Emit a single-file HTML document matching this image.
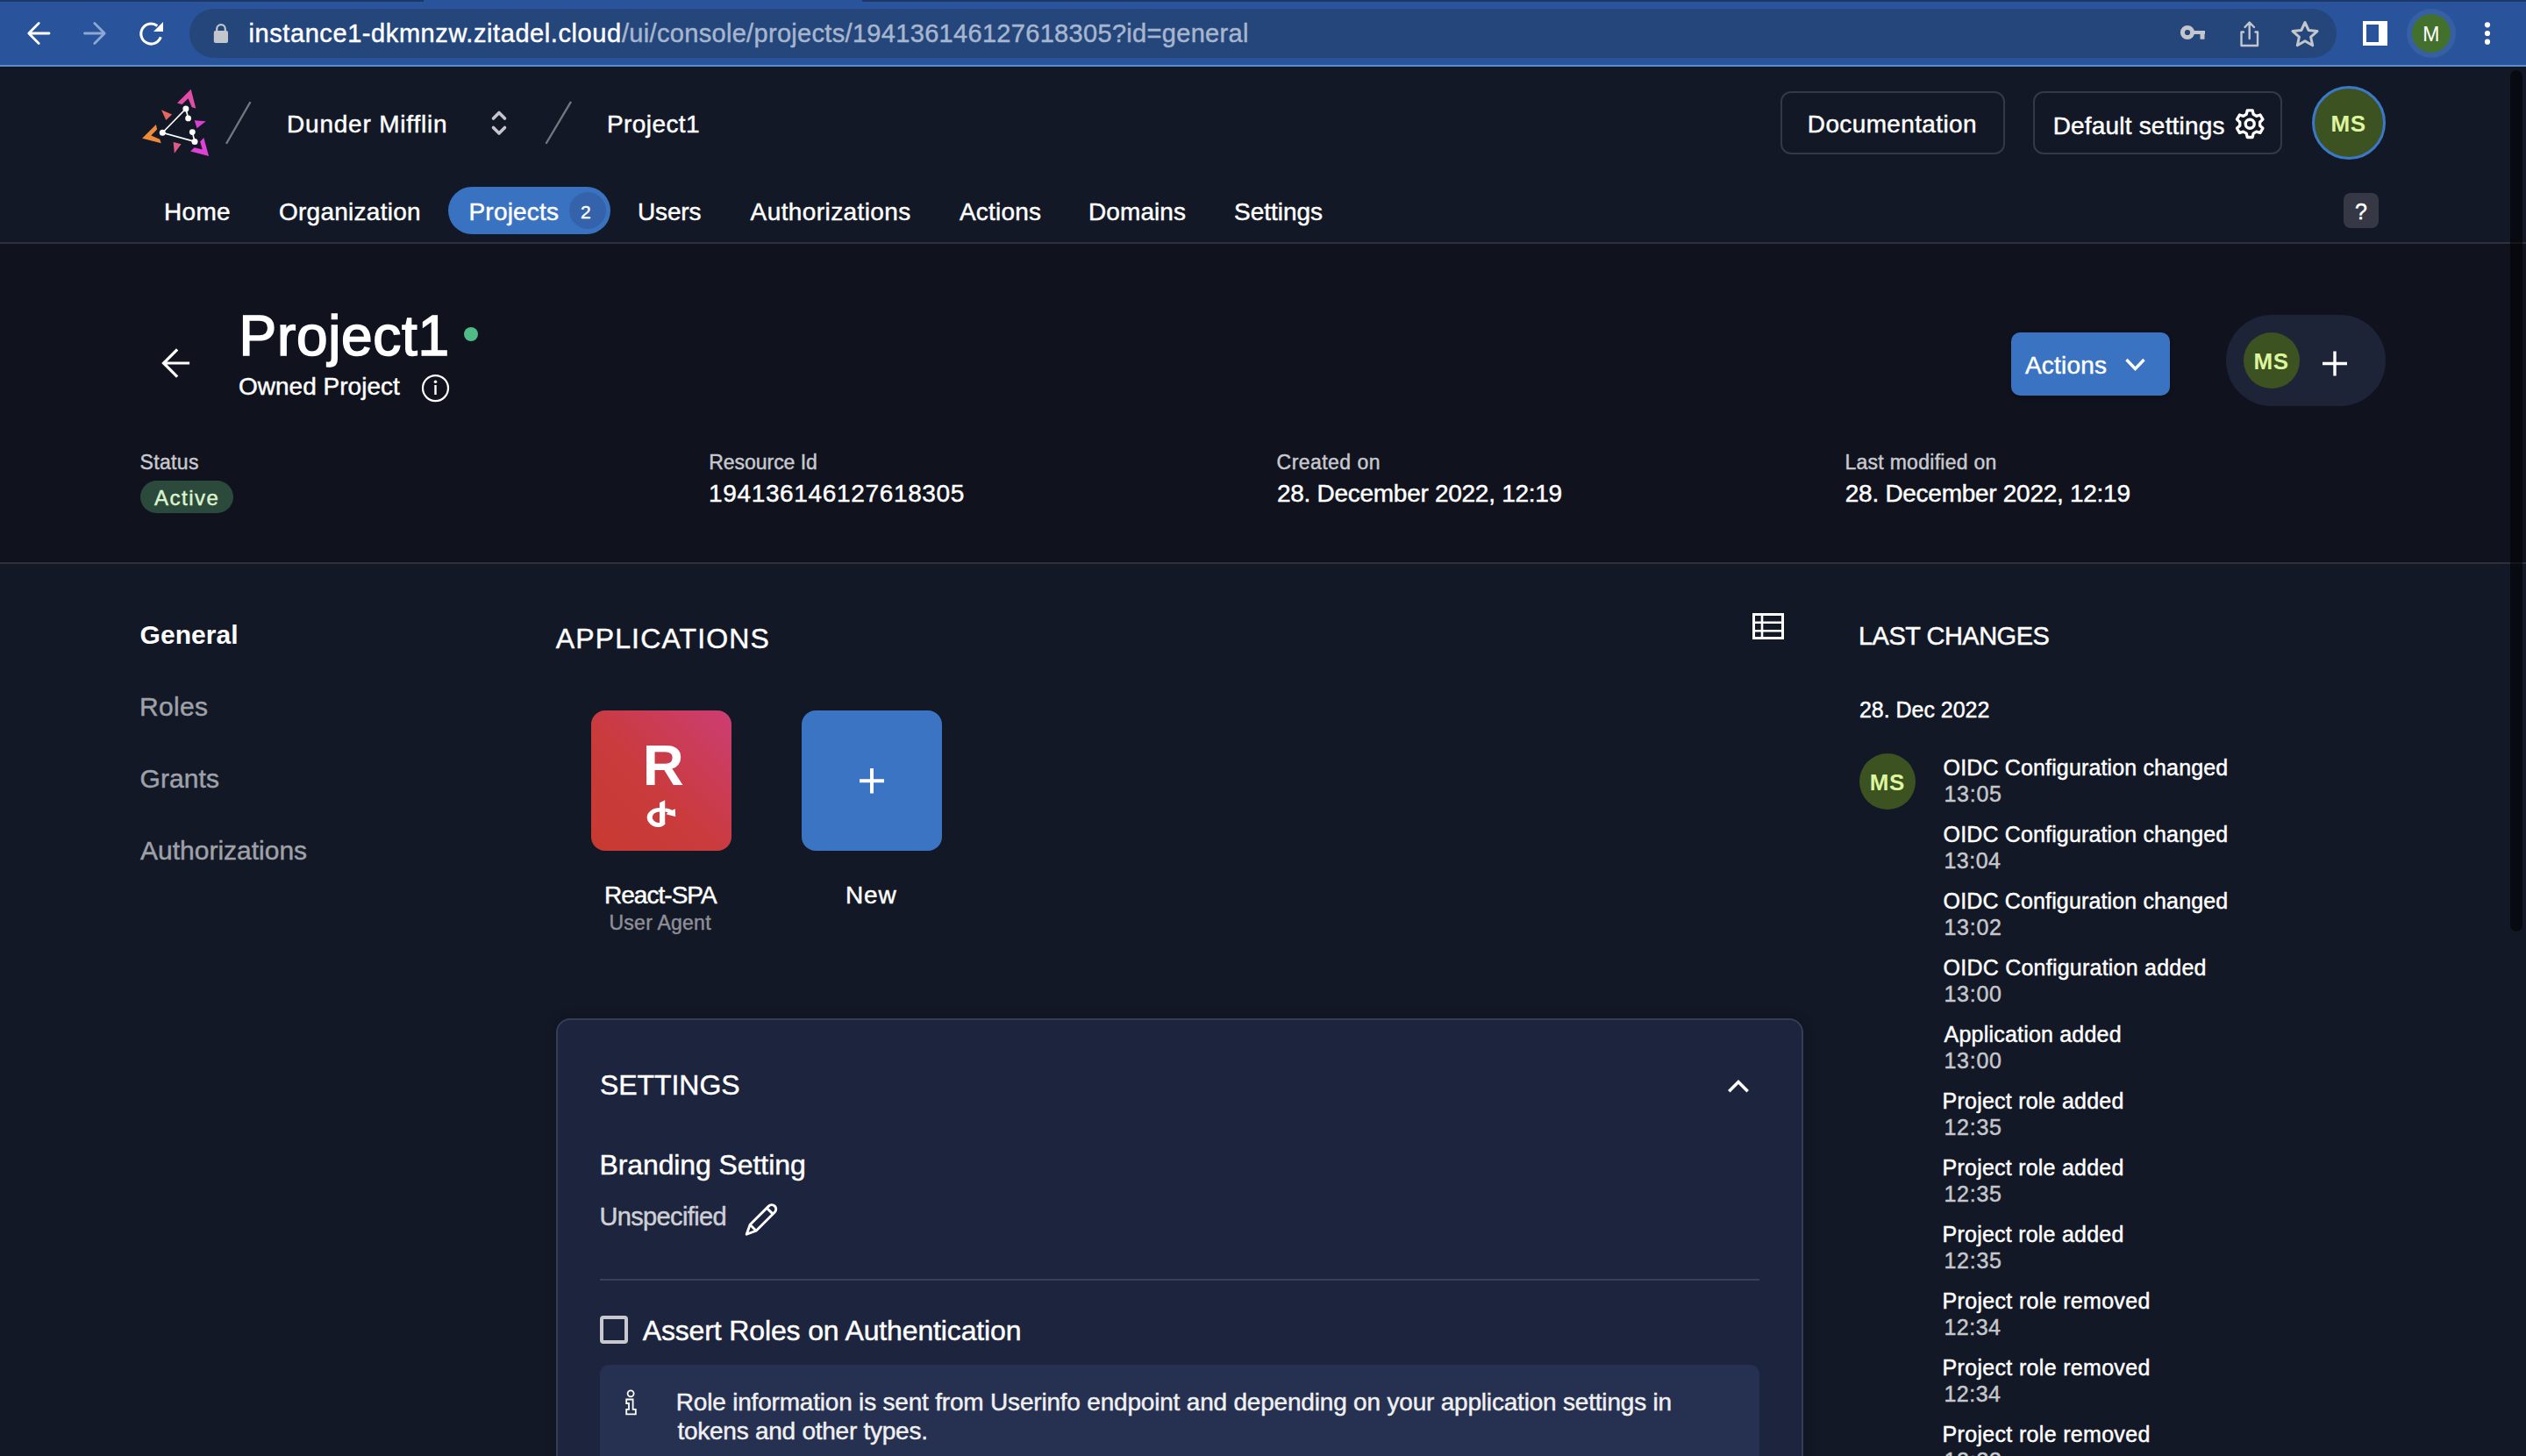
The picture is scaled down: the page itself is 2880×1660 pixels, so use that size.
<!DOCTYPE html>
<html><head><meta charset="utf-8"><style>

html,body{margin:0;padding:0;}
body{width:2880px;height:1660px;overflow:hidden;position:relative;background:#131826;font-family:"Liberation Sans",sans-serif;}
.t{position:absolute;line-height:1;white-space:pre;-webkit-text-stroke:0.45px currentColor;}
.a{position:absolute;}
svg.a{overflow:visible;}

</style></head><body>
<div class="a" style="left:0px;top:0px;width:2880px;height:76px;background:#29539a;"></div>
<div class="a" style="left:0px;top:0px;width:483px;height:2px;background:#1d3868;"></div>
<div class="a" style="left:983px;top:0px;width:1897px;height:2px;background:#1d3868;"></div>
<div class="a" style="left:0px;top:74px;width:2880px;height:2px;background:#5f8ccb;"></div>
<div class="a" style="left:0px;top:76px;width:2880px;height:200px;background:#131826;"></div>
<div class="a" style="left:0px;top:278px;width:2880px;height:363px;background:#10131e;"></div>
<div class="a" style="left:216px;top:10px;width:2448px;height:56px;background:#24467b;border-radius:28px;"></div>
<svg class="a" style="left:20px;top:15px" width="180" height="47" viewBox="20 15 180 47"><path d="M56 38H33.5M44.2 26.6L32.8 38L44.2 49.4" fill="none" stroke="#fff" stroke-width="2.8" stroke-linecap="round" stroke-linejoin="round"/><path d="M96.5 38H119M107.8 26.6L119.2 38L107.8 49.4" fill="none" stroke="#8ea8d3" stroke-width="2.8" stroke-linecap="round" stroke-linejoin="round"/><path d="M183.2 42.2A11.5 11.5 0 1 1 179.3 29.4" fill="none" stroke="#fff" stroke-width="3.1"/><path d="M186 25V36H175Z" fill="#fff"/></svg>
<svg class="a" style="left:240px;top:25px" width="25" height="27" viewBox="240 25 25 27"><path d="M247.2 36V32.9A4.8 4.8 0 0 1 256.8 32.9V36" fill="none" stroke="#c3c6cb" stroke-width="2.2"/><rect x="243.8" y="35" width="16.2" height="14" rx="2" fill="#c3c6cb"/></svg>
<svg class="a" style="left:2480px;top:20px" width="170" height="38" viewBox="2480 20 170 38"><circle cx="2494" cy="37" r="5.6" fill="none" stroke="#c3c6cb" stroke-width="5"/><path d="M2499 35H2514V39H2513.5V44.8H2508.5V39H2499Z" fill="#c3c6cb"/><path d="M2558 36.5H2555.5V52H2574V36.5H2571.5M2564.7 44V26.5M2559.5 31L2564.7 25.5L2570 31" fill="none" stroke="#c3c6cb" stroke-width="2.4" stroke-linejoin="round" stroke-linecap="round"/><path d="M2628 25.5L2632.2 34.6L2642 35.6L2634.6 42.2L2636.7 51.8L2628 46.8L2619.3 51.8L2621.4 42.2L2614 35.6L2623.8 34.6Z" fill="none" stroke="#c3c6cb" stroke-width="3" stroke-linejoin="round"/></svg>
<div class="a" style="left:2694px;top:24px;width:28px;height:28px;background:#fff;"></div>
<div class="a" style="left:2698px;top:28px;width:14px;height:20px;background:#29539a;"></div>
<div class="a" style="left:2744px;top:10px;width:56px;height:56px;border-radius:50%;background:#3660a3;"></div>
<div class="a" style="left:2750px;top:16px;width:44px;height:44px;border-radius:50%;background:#44702e;"></div>
<svg class="a" style="left:2825px;top:20px" width="25" height="38" viewBox="2825 20 25 38"><circle cx="2836" cy="28.3" r="3.1" fill="#fff"/><circle cx="2836" cy="38" r="3.1" fill="#fff"/><circle cx="2836" cy="47.7" r="3.1" fill="#fff"/></svg>
<svg class="a" style="left:150px;top:95px" width="100" height="90" viewBox="150 95 100 90"><defs><linearGradient id="lg1" x1="0" y1="0" x2="1" y2="1"><stop offset="0" stop-color="#e45593"/><stop offset="1" stop-color="#dd48b8"/></linearGradient></defs><path d="M202 117.6L217.7 101.8L223.3 123.4L218.7 122.2L214.6 112.3L207.5 119.1Z" fill="#e04ca6"/><path d="M177.9 142L162.1 157.7L183.7 163.3L182.2 158.7L172.3 154.6L179.1 147.5Z" fill="#ef8a3b"/><path d="M232.3 157.1L238.1 178.1L217.1 172.6L221.7 168.2L230.7 170.4L228.2 161.4Z" fill="#df40d6"/><path d="M184 125.3L196.1 130.5L189.3 137Z" fill="#e5675f"/><path d="M221.7 137.3L234.7 138.3L224.5 146.3Z" fill="#d940cf"/><path d="M197.6 162.1L206.6 164.2L198.9 174.7Z" fill="#e05a87"/><path d="M211.9 124L185.3 151.2L222 161.4M211.9 124L214.6 134.9M219.3 150.6L222 161.4" fill="none" stroke="#fff" stroke-width="1.7"/><circle cx="211.9" cy="124" r="3.5" fill="#fff"/><circle cx="214.6" cy="134.9" r="3.4" fill="#fff"/><circle cx="185.3" cy="151.2" r="3.5" fill="#fff"/><circle cx="219.3" cy="150.6" r="3.4" fill="#fff"/><circle cx="222" cy="161.4" r="3.5" fill="#fff"/></svg>
<svg class="a" style="left:250px;top:110px" width="410" height="60" viewBox="250 110 410 60"><path d="M258.5 163L285 117M623 163L650.6 116.7" stroke="#74767e" stroke-width="2.4" stroke-linecap="round"/><path d="M562.5 135L569 128.5L575.5 135M562.5 145.5L569 152L575.5 145.5" fill="none" stroke="#c5c6cc" stroke-width="3.6" stroke-linecap="round" stroke-linejoin="round"/></svg>
<div class="a" style="left:2030px;top:104px;width:256px;height:72px;box-sizing:border-box;border:2px solid #363843;border-radius:12px;"></div>
<div class="a" style="left:2318px;top:104px;width:284px;height:72px;box-sizing:border-box;border:2px solid #363843;border-radius:12px;"></div>
<svg class="a" style="left:2540px;top:116px" width="50" height="50" viewBox="2540 116 50 50"><path d="M2569.17 130.30 L2568.18 125.89 L2562.22 125.89 L2561.23 130.30 L2557.74 132.31 L2553.43 130.97 L2550.45 136.12 L2553.78 139.19 L2553.78 143.21 L2550.45 146.28 L2553.43 151.43 L2557.74 150.09 L2561.23 152.10 L2562.22 156.51 L2568.18 156.51 L2569.17 152.10 L2572.66 150.09 L2576.97 151.43 L2579.95 146.28 L2576.62 143.21 L2576.62 139.19 L2579.95 136.12 L2576.97 130.97 L2572.66 132.31Z" fill="none" stroke="#fff" stroke-width="3.3" stroke-linejoin="round"/><circle cx="2565.2" cy="141.2" r="5" fill="none" stroke="#fff" stroke-width="3.4"/></svg>
<div class="a" style="left:2636px;top:98px;width:84px;height:84px;box-sizing:border-box;border-radius:50%;border:3.5px solid #3b78c8;background:#3c5221;"></div>
<div class="a" style="left:511px;top:213px;width:185px;height:54px;background:#3a72c2;border-radius:27px;"></div>
<div class="a" style="left:649px;top:219px;width:42px;height:42px;background:#3463ab;border-radius:50%;"></div>
<div class="a" style="left:0px;top:276px;width:2880px;height:2px;background:#2e313c;"></div>
<div class="a" style="left:2672px;top:220px;width:40px;height:40px;background:#363945;border-radius:8px;"></div>
<svg class="a" style="left:175px;top:390px" width="50" height="50" viewBox="175 390 50 50"><path d="M214.5 414H187M201 399.5L186.5 414L201 428.5" fill="none" stroke="#fff" stroke-width="3.2" stroke-linecap="square"/></svg>
<div class="a" style="left:529px;top:373px;width:16px;height:16px;border-radius:50%;background:#4fbb85;"></div>
<svg class="a" style="left:475px;top:420px" width="45" height="45" viewBox="475 420 45 45"><circle cx="496.5" cy="442.6" r="14.5" fill="none" stroke="#fff" stroke-width="2.2"/><circle cx="496.5" cy="435.3" r="1.8" fill="#fff"/><rect x="495.3" y="439" width="2.4" height="11" fill="#fff"/></svg>
<div class="a" style="left:2293px;top:379px;width:181px;height:72px;background:#3a73c1;border-radius:10px;box-shadow:0 2px 4px rgba(0,0,0,.35);"></div>
<svg class="a" style="left:2415px;top:400px" width="40" height="30" viewBox="2415 400 40 30"><path d="M2424.5 410L2434.5 420.5L2444.5 410" fill="none" stroke="#fff" stroke-width="3.4"/></svg>
<div class="a" style="left:2538px;top:359px;width:182px;height:104px;background:#1d2438;border-radius:52px;"></div>
<div class="a" style="left:2558px;top:379px;width:64px;height:64px;background:#3c5221;border-radius:50%;"></div>
<svg class="a" style="left:2640px;top:395px" width="45" height="40" viewBox="2640 395 45 40"><path d="M2662 400.5V428.5M2648 414.5H2676" stroke="#fff" stroke-width="3.4"/></svg>
<div class="a" style="left:160px;top:548px;width:106px;height:37px;background:#2c4a3c;border-radius:18.5px;"></div>
<div class="a" style="left:0px;top:641px;width:2880px;height:2px;background:#2e313c;"></div>
<svg class="a" style="left:1990px;top:690px" width="50" height="45" viewBox="1990 690 50 45"><rect x="1999.5" y="700.5" width="33" height="27" fill="none" stroke="#fff" stroke-width="3"/><path d="M2009 701V727M2000 709.8H2032M2000 719.2H2032" stroke="#fff" stroke-width="2.6"/></svg>
<div class="a" style="left:674px;top:810px;width:160px;height:160px;background:linear-gradient(to top right,#c83a30 0%,#c93b3d 45%,#cd3d73 100%);border-radius:16px;"></div>
<div class="a" style="left:914px;top:810px;width:160px;height:160px;background:#3a74c2;border-radius:16px;"></div>
<svg class="a" style="left:970px;top:870px" width="50" height="40" viewBox="970 870 50 40"><path d="M994 876V904.5M980 890.2H1008" stroke="#fff" stroke-width="4"/></svg>
<svg class="a" style="left:730px;top:900px" width="50" height="50" viewBox="730 900 50 50"><path d="M752 921.1A14.3 11 0 0 0 752 943.1Q755.8 942.6 758.2 939.8V937.9L752 938A8.3 6.3 0 0 1 752 925.4Z" fill="#fff"/><path d="M752 915.2L758.2 912.2V939.8L752 941Z" fill="#fff"/><path d="M758.2 921.5Q763 921.6 766.4 923.7L769.8 922.2L770.2 930.9L759.5 928.3L761.5 926.2Q760 925.6 758.2 925.4Z" fill="#fff"/></svg>
<div class="a" style="left:2120px;top:859px;width:64px;height:64px;background:#3c5221;border-radius:50%;"></div>
<div class="a" style="left:634px;top:1161px;width:1422px;height:599px;box-sizing:border-box;background:#1d243d;border:2px solid #343e55;border-radius:16px;box-shadow:0 0 14px rgba(0,0,0,.22);"></div>
<svg class="a" style="left:1960px;top:1220px" width="45" height="35" viewBox="1960 1220 45 35"><path d="M1971.3 1244.3L1982 1233.6L1992.7 1244.3" fill="none" stroke="#fff" stroke-width="3.6"/></svg>
<svg class="a" style="left:840px;top:1362px" width="60" height="56" viewBox="840 1362 60 56"><path d="M851.20 1407.20L855.16 1396.31L876.37 1375.10A4.9 4.9 0 0 1 883.30 1382.03L862.09 1403.24Z M855.16 1396.31L862.09 1403.24 M874.25 1377.22L881.18 1384.15" fill="none" stroke="#fff" stroke-width="2.9" stroke-linejoin="round"/></svg>
<div class="a" style="left:684px;top:1458px;width:1322px;height:2px;background:#39415a;"></div>
<div class="a" style="left:684px;top:1500px;width:32px;height:32px;box-sizing:border-box;border:4px solid #c8c9cf;border-radius:4px;"></div>
<div class="a" style="left:684px;top:1556px;width:1322px;height:204px;background:#263050;border-radius:10px;"></div>
<svg class="a" style="left:705px;top:1580px" width="30" height="40" viewBox="705 1580 30 40"><circle cx="719.1" cy="1588.8" r="3.5" fill="none" stroke="#fff" stroke-width="1.8"/><path d="M714.2 1595.5H721.6V1606.9H724.8V1612.3H714.2V1606.9H717V1600H714.2Z" fill="none" stroke="#fff" stroke-width="1.8" stroke-linejoin="miter"/></svg>
<div class="a" style="left:2862px;top:80px;width:14px;height:982px;background:rgba(0,0,0,.55);border-radius:7px;"></div>
<div class="t" style="left:283.50px;top:24.00px;font-size:29px;letter-spacing:0.579px;color:#ffffff;">instance1-dkmnzw.zitadel.cloud</div>
<div class="t" style="left:709.00px;top:24.00px;font-size:29px;letter-spacing:0.315px;color:#a7b6cf;">/ui/console/projects/194136146127618305?id=general</div>
<div class="t" style="left:2762.20px;top:27.70px;font-size:23px;color:#fff;-webkit-text-stroke:0;">M</div>
<div class="t" style="left:327.00px;top:128.00px;font-size:28px;letter-spacing:0.796px;color:#fff;">Dunder Mifflin</div>
<div class="t" style="left:692.00px;top:128.20px;font-size:28px;letter-spacing:0.408px;color:#fff;">Project1</div>
<div class="t" style="left:2060.80px;top:127.80px;font-size:28px;letter-spacing:0.370px;color:#fff;">Documentation</div>
<div class="t" style="left:2340.70px;top:129.70px;font-size:28px;letter-spacing:0.187px;color:#fff;">Default settings</div>
<div class="t" style="left:2657.50px;top:128.00px;font-size:26px;font-weight:700;-webkit-text-stroke:0;letter-spacing:0.642px;color:#ddf59e;">MS</div>
<div class="t" style="left:187.00px;top:227.60px;font-size:28px;letter-spacing:0.294px;color:#fff;">Home</div>
<div class="t" style="left:318.00px;top:227.60px;font-size:28px;letter-spacing:0.256px;color:#fff;">Organization</div>
<div class="t" style="left:534.50px;top:227.60px;font-size:28px;letter-spacing:0.194px;color:#fff;">Projects</div>
<div class="t" style="left:662.00px;top:230.70px;font-size:21px;color:#fff;">2</div>
<div class="t" style="left:727.00px;top:227.60px;font-size:28px;letter-spacing:-0.154px;color:#fff;">Users</div>
<div class="t" style="left:855.60px;top:227.60px;font-size:28px;letter-spacing:0.405px;color:#fff;">Authorizations</div>
<div class="t" style="left:1094.00px;top:227.60px;font-size:28px;letter-spacing:0.197px;color:#fff;">Actions</div>
<div class="t" style="left:1241.00px;top:227.60px;font-size:28px;letter-spacing:0.086px;color:#fff;">Domains</div>
<div class="t" style="left:1407.00px;top:227.60px;font-size:28px;letter-spacing:-0.025px;color:#fff;">Settings</div>
<div class="t" style="left:2685.00px;top:229.40px;font-size:25px;color:#fff;">?</div>
<div class="t" style="left:272.50px;top:351.20px;font-size:64px;letter-spacing:0.688px;color:#fff;-webkit-text-stroke:1.6px #fff;">Project1</div>
<div class="t" style="left:272.00px;top:426.70px;font-size:28px;letter-spacing:0.012px;color:#fff;">Owned Project</div>
<div class="t" style="left:2309.00px;top:402.60px;font-size:28px;letter-spacing:0.197px;color:#fff;">Actions</div>
<div class="t" style="left:2569.50px;top:399.20px;font-size:26px;font-weight:700;-webkit-text-stroke:0;letter-spacing:0.542px;color:#ddf59e;">MS</div>
<div class="t" style="left:159.50px;top:516.00px;font-size:23px;letter-spacing:0.359px;color:#c8c9cf;">Status</div>
<div class="t" style="left:176.00px;top:556.00px;font-size:24px;letter-spacing:1.518px;color:#dcf5cf;">Active</div>
<div class="t" style="left:808.30px;top:515.80px;font-size:23px;letter-spacing:-0.052px;color:#c8c9cf;">Resource Id</div>
<div class="t" style="left:808.00px;top:549.00px;font-size:28px;letter-spacing:0.651px;color:#fff;">194136146127618305</div>
<div class="t" style="left:1455.60px;top:516.00px;font-size:23px;letter-spacing:0.455px;color:#c8c9cf;">Created on</div>
<div class="t" style="left:1456.00px;top:549.00px;font-size:28px;letter-spacing:-0.282px;color:#fff;">28. December 2022, 12:19</div>
<div class="t" style="left:2103.40px;top:516.00px;font-size:23px;letter-spacing:0.281px;color:#c8c9cf;">Last modified on</div>
<div class="t" style="left:2103.80px;top:549.00px;font-size:28px;letter-spacing:-0.278px;color:#fff;">28. December 2022, 12:19</div>
<div class="t" style="left:159.60px;top:709.00px;font-size:30px;font-weight:700;-webkit-text-stroke:0;letter-spacing:0.052px;color:#fff;">General</div>
<div class="t" style="left:159.00px;top:791.00px;font-size:30px;letter-spacing:0.325px;color:#9fa1a9;">Roles</div>
<div class="t" style="left:159.60px;top:872.60px;font-size:30px;letter-spacing:0.074px;color:#9fa1a9;">Grants</div>
<div class="t" style="left:160.00px;top:954.60px;font-size:30px;color:#9fa1a9;">Authorizations</div>
<div class="t" style="left:633.70px;top:712.00px;font-size:32px;letter-spacing:1.151px;color:#fff;">APPLICATIONS</div>
<div class="t" style="left:732.70px;top:840.00px;font-size:65px;font-weight:700;-webkit-text-stroke:0;color:#fff;">R</div>
<div class="t" style="left:689.00px;top:1007.00px;font-size:28px;letter-spacing:-0.968px;color:#fff;">React-SPA</div>
<div class="t" style="left:694.50px;top:1041.00px;font-size:23px;letter-spacing:0.248px;color:#8f8f97;">User Agent</div>
<div class="t" style="left:964.00px;top:1007.00px;font-size:28px;letter-spacing:0.854px;color:#fff;">New</div>
<div class="t" style="left:2119.00px;top:711.40px;font-size:29px;letter-spacing:-0.514px;color:#fff;">LAST CHANGES</div>
<div class="t" style="left:2120.00px;top:796.80px;font-size:25px;letter-spacing:-0.038px;color:#fff;">28. Dec 2022</div>
<div class="t" style="left:2131.80px;top:879.00px;font-size:26px;font-weight:700;-webkit-text-stroke:0;letter-spacing:0.542px;color:#ddf59e;">MS</div>
<div class="t" style="left:683.90px;top:1221.00px;font-size:32px;letter-spacing:-0.039px;color:#fff;">SETTINGS</div>
<div class="t" style="left:683.40px;top:1311.80px;font-size:32px;letter-spacing:-0.087px;color:#fff;">Branding Setting</div>
<div class="t" style="left:683.40px;top:1373.00px;font-size:29px;letter-spacing:-0.620px;color:#cfd0d6;">Unspecified</div>
<div class="t" style="left:732.70px;top:1501.00px;font-size:32px;letter-spacing:-0.137px;color:#fff;">Assert Roles on Authentication</div>
<div class="t" style="left:770.80px;top:1584.80px;font-size:28px;letter-spacing:-0.196px;color:#f0f0f3;">Role information is sent from Userinfo endpoint and depending on your application settings in</div>
<div class="t" style="left:772.40px;top:1617.80px;font-size:28px;letter-spacing:-0.250px;color:#f0f0f3;">tokens and other types.</div>
<div class="t" style="left:2215.60px;top:862.70px;font-size:25px;letter-spacing:0.143px;color:#fff;">OIDC Configuration changed</div>
<div class="t" style="left:2216.50px;top:892.70px;font-size:25px;letter-spacing:0.711px;color:#c6c7cc;">13:05</div>
<div class="t" style="left:2215.60px;top:938.70px;font-size:25px;letter-spacing:0.143px;color:#fff;">OIDC Configuration changed</div>
<div class="t" style="left:2216.50px;top:968.70px;font-size:25px;letter-spacing:0.461px;color:#c6c7cc;">13:04</div>
<div class="t" style="left:2215.60px;top:1014.70px;font-size:25px;letter-spacing:0.143px;color:#fff;">OIDC Configuration changed</div>
<div class="t" style="left:2216.50px;top:1044.70px;font-size:25px;letter-spacing:0.711px;color:#c6c7cc;">13:02</div>
<div class="t" style="left:2215.60px;top:1090.70px;font-size:25px;letter-spacing:0.230px;color:#fff;">OIDC Configuration added</div>
<div class="t" style="left:2216.50px;top:1120.70px;font-size:25px;letter-spacing:0.711px;color:#c6c7cc;">13:00</div>
<div class="t" style="left:2216.60px;top:1166.70px;font-size:25px;letter-spacing:0.202px;color:#fff;">Application added</div>
<div class="t" style="left:2216.50px;top:1196.70px;font-size:25px;letter-spacing:0.711px;color:#c6c7cc;">13:00</div>
<div class="t" style="left:2214.60px;top:1242.70px;font-size:25px;letter-spacing:0.223px;color:#fff;">Project role added</div>
<div class="t" style="left:2216.50px;top:1272.70px;font-size:25px;letter-spacing:0.711px;color:#c6c7cc;">12:35</div>
<div class="t" style="left:2214.60px;top:1318.70px;font-size:25px;letter-spacing:0.223px;color:#fff;">Project role added</div>
<div class="t" style="left:2216.50px;top:1348.70px;font-size:25px;letter-spacing:0.711px;color:#c6c7cc;">12:35</div>
<div class="t" style="left:2214.60px;top:1394.70px;font-size:25px;letter-spacing:0.223px;color:#fff;">Project role added</div>
<div class="t" style="left:2216.50px;top:1424.70px;font-size:25px;letter-spacing:0.711px;color:#c6c7cc;">12:35</div>
<div class="t" style="left:2214.60px;top:1470.70px;font-size:25px;letter-spacing:0.319px;color:#fff;">Project role removed</div>
<div class="t" style="left:2216.50px;top:1500.70px;font-size:25px;letter-spacing:0.461px;color:#c6c7cc;">12:34</div>
<div class="t" style="left:2214.60px;top:1546.70px;font-size:25px;letter-spacing:0.319px;color:#fff;">Project role removed</div>
<div class="t" style="left:2216.50px;top:1576.70px;font-size:25px;letter-spacing:0.461px;color:#c6c7cc;">12:34</div>
<div class="t" style="left:2214.60px;top:1622.70px;font-size:25px;letter-spacing:0.319px;color:#fff;">Project role removed</div>
<div class="t" style="left:2216.50px;top:1652.70px;font-size:25px;letter-spacing:0.711px;color:#c6c7cc;">12:33</div>
</body></html>
